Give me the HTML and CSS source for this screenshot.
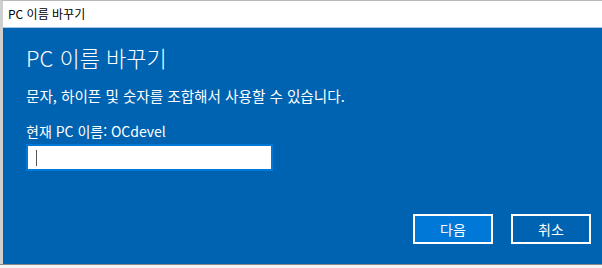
FILE: index.html
```html
<!DOCTYPE html>
<html lang="ko">
<head>
    <meta charset="UTF-8">
    <meta name="viewport" content="width=device-width, initial-scale=1.0">
    <title>PC 이름 바꾸기</title>
    <link rel="stylesheet" href="styles.css">
</head>
<body>
    <div class="window">
        <div class="title-bar">PC 이름 바꾸기</div>
        <div class="panel">
            <h1>PC 이름 바꾸기</h1>
            <p class="hint">문자, 하이픈 및 숫자를 조합해서 사용할 수 있습니다.</p>
            <p class="current">현재 PC 이름: OCdevel</p>
            <div class="name-input"><span class="caret"></span></div>
            <div class="actions">
                <button class="primary" type="button">다음</button>
                <button type="button">취소</button>
            </div>
        </div>
    </div>
    <div class="behind"></div>
</body>
</html>
```

FILE: styles.css
```css
body {
    margin: 0;
    height: 268px;
    overflow: hidden;
    font-family: "Noto Sans CJK KR", "Noto Sans", sans-serif;
    background-color: #f3f3f3;
}

.window {
    border-top: 1px solid #b8b8b8;
    border-left: 3px solid #cfcfcf;
}

.title-bar {
    height: 26px;
    line-height: 26px;
    padding-left: 5px;
    font-size: 12px;
    color: #000;
    background-color: #fff;
    border-bottom: 1px solid #a7c7e7;
}

.panel {
    height: 236px;
    padding: 0 11px 0 23px;
    box-sizing: border-box;
    background-color: #0063b1;
    color: #fff;
    display: flex;
    flex-direction: column;
}

h1 {
    margin: 14px 0 0;
    font-size: 22px;
    font-weight: 300;
    line-height: 30px;
}

.hint {
    margin: 14px 0 0;
    font-size: 14.6px;
    line-height: 20px;
}

.current {
    margin: 15px 0 0;
    font-size: 14px;
    line-height: 20px;
}

.name-input {
    margin-top: 3px;
    width: 235px;
    height: 23px;
    background-color: #fff;
    border: 2px solid #0078d7;
    display: flex;
    align-items: center;
    padding-left: 8px;
}

.caret {
    width: 1px;
    height: 16px;
    background-color: #555;
}

.actions {
    margin-top: 43px;
    display: flex;
    justify-content: flex-end;
    gap: 18px;
}

button {
    width: 80px;
    height: 30px;
    font-family: inherit;
    font-size: 14px;
    color: #fff;
    background-color: #0063b1;
    border: 2px solid #fff;
    padding: 0;
}

button.primary {
    background-color: #0078d7;
}

.behind {
    height: 4px;
    border-top: 1px solid #8a8a8a;
}
```
